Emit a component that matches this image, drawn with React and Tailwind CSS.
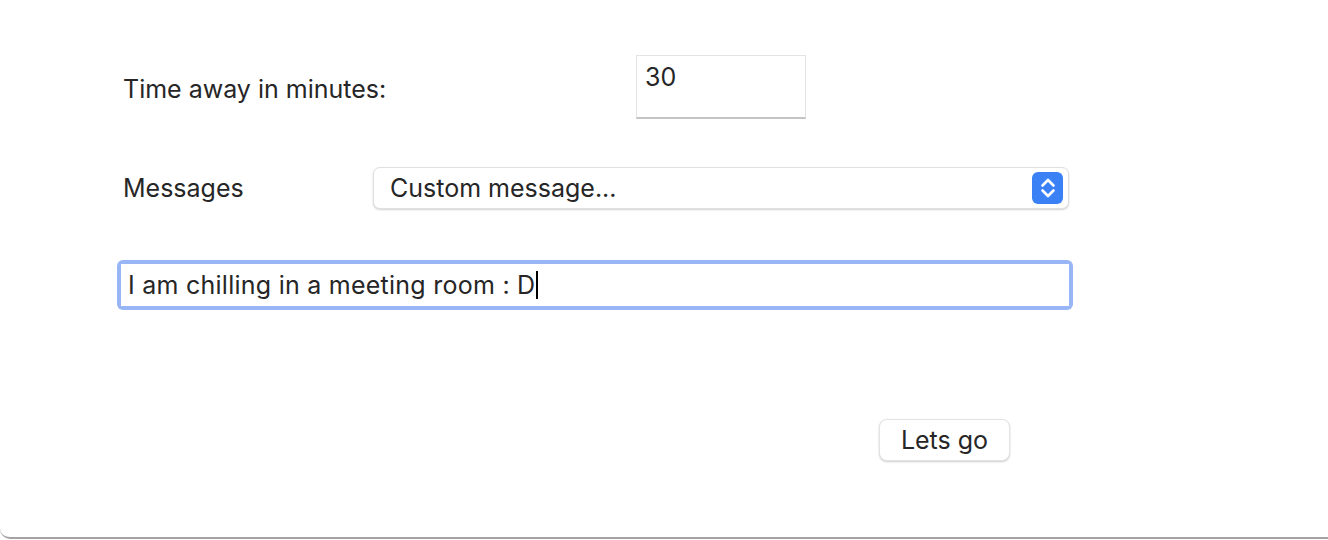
const font = { fontFamily: 'Inter, "Noto Sans", sans-serif' }

const Stepper = () => (
  <div className="flex h-[32px] w-[31px] items-center justify-center rounded-[6px] bg-[#3a81f6]">
    <svg width="18" height="26" viewBox="0 0 18 26" fill="none" stroke="white" strokeWidth="2.6" strokeLinecap="round" strokeLinejoin="round">
      <path d="M3.5 10.5 L9 5 L14.5 10.5" />
      <path d="M3.5 15.5 L9 21 L14.5 15.5" />
    </svg>
  </div>
)

export default function App() {
  return (
    <div className="h-[540px] w-[1328px] bg-white text-[#262626]" style={font}>
      <div className="h-[539px] rounded-bl-[10px] border-b-[2px] border-[#a3a3a3] bg-white">
        <div className="flex items-start pl-[123px] pt-[55px]">
          <div className="w-[513px] pt-[19px] text-[25px] leading-[30px]">Time away in minutes:</div>
          <div className="h-[64px] w-[170px] border border-[#e3e3e3] border-b-[2px] border-b-[#c4c4c4] px-[8px] pt-[6px] text-[25px] leading-[30px]">
            30
          </div>
        </div>

        <div className="mt-[48px] flex items-center pl-[123px]">
          <div className="w-[250px] text-[25px] leading-[30px]">Messages</div>
          <div className="flex h-[42px] w-[696px] items-center justify-between rounded-[7px] border border-[#e0e0e0] bg-white pl-[16px] pr-[5px] shadow-[0_1px_2px_rgba(0,0,0,0.18)]">
            <span className="text-[25px] leading-[30px]">Custom message...</span>
            <Stepper />
          </div>
        </div>

        <div className="mt-[51px] pl-[117px]">
          <div className="h-[50px] w-[956px] rounded-[6px] bg-[#98b5f6] p-[4px]">
            <div className="flex h-full items-center bg-white pl-[7px] text-[25px] leading-[30px] tracking-[0.01em]">
              <span>I am chilling in a meeting room : D</span>
              <span className="ml-[1px] h-[28px] w-[2px] bg-black" />
            </div>
          </div>
        </div>

        <div className="mt-[109px] pl-[879px]">
          <div className="flex h-[42px] w-[131px] items-center justify-center rounded-[8px] border border-[#e3e3e3] bg-white text-[25px] leading-[30px] shadow-[0_1px_2px_rgba(0,0,0,0.2)]">
            Lets go
          </div>
        </div>
      </div>
    </div>
  )
}
